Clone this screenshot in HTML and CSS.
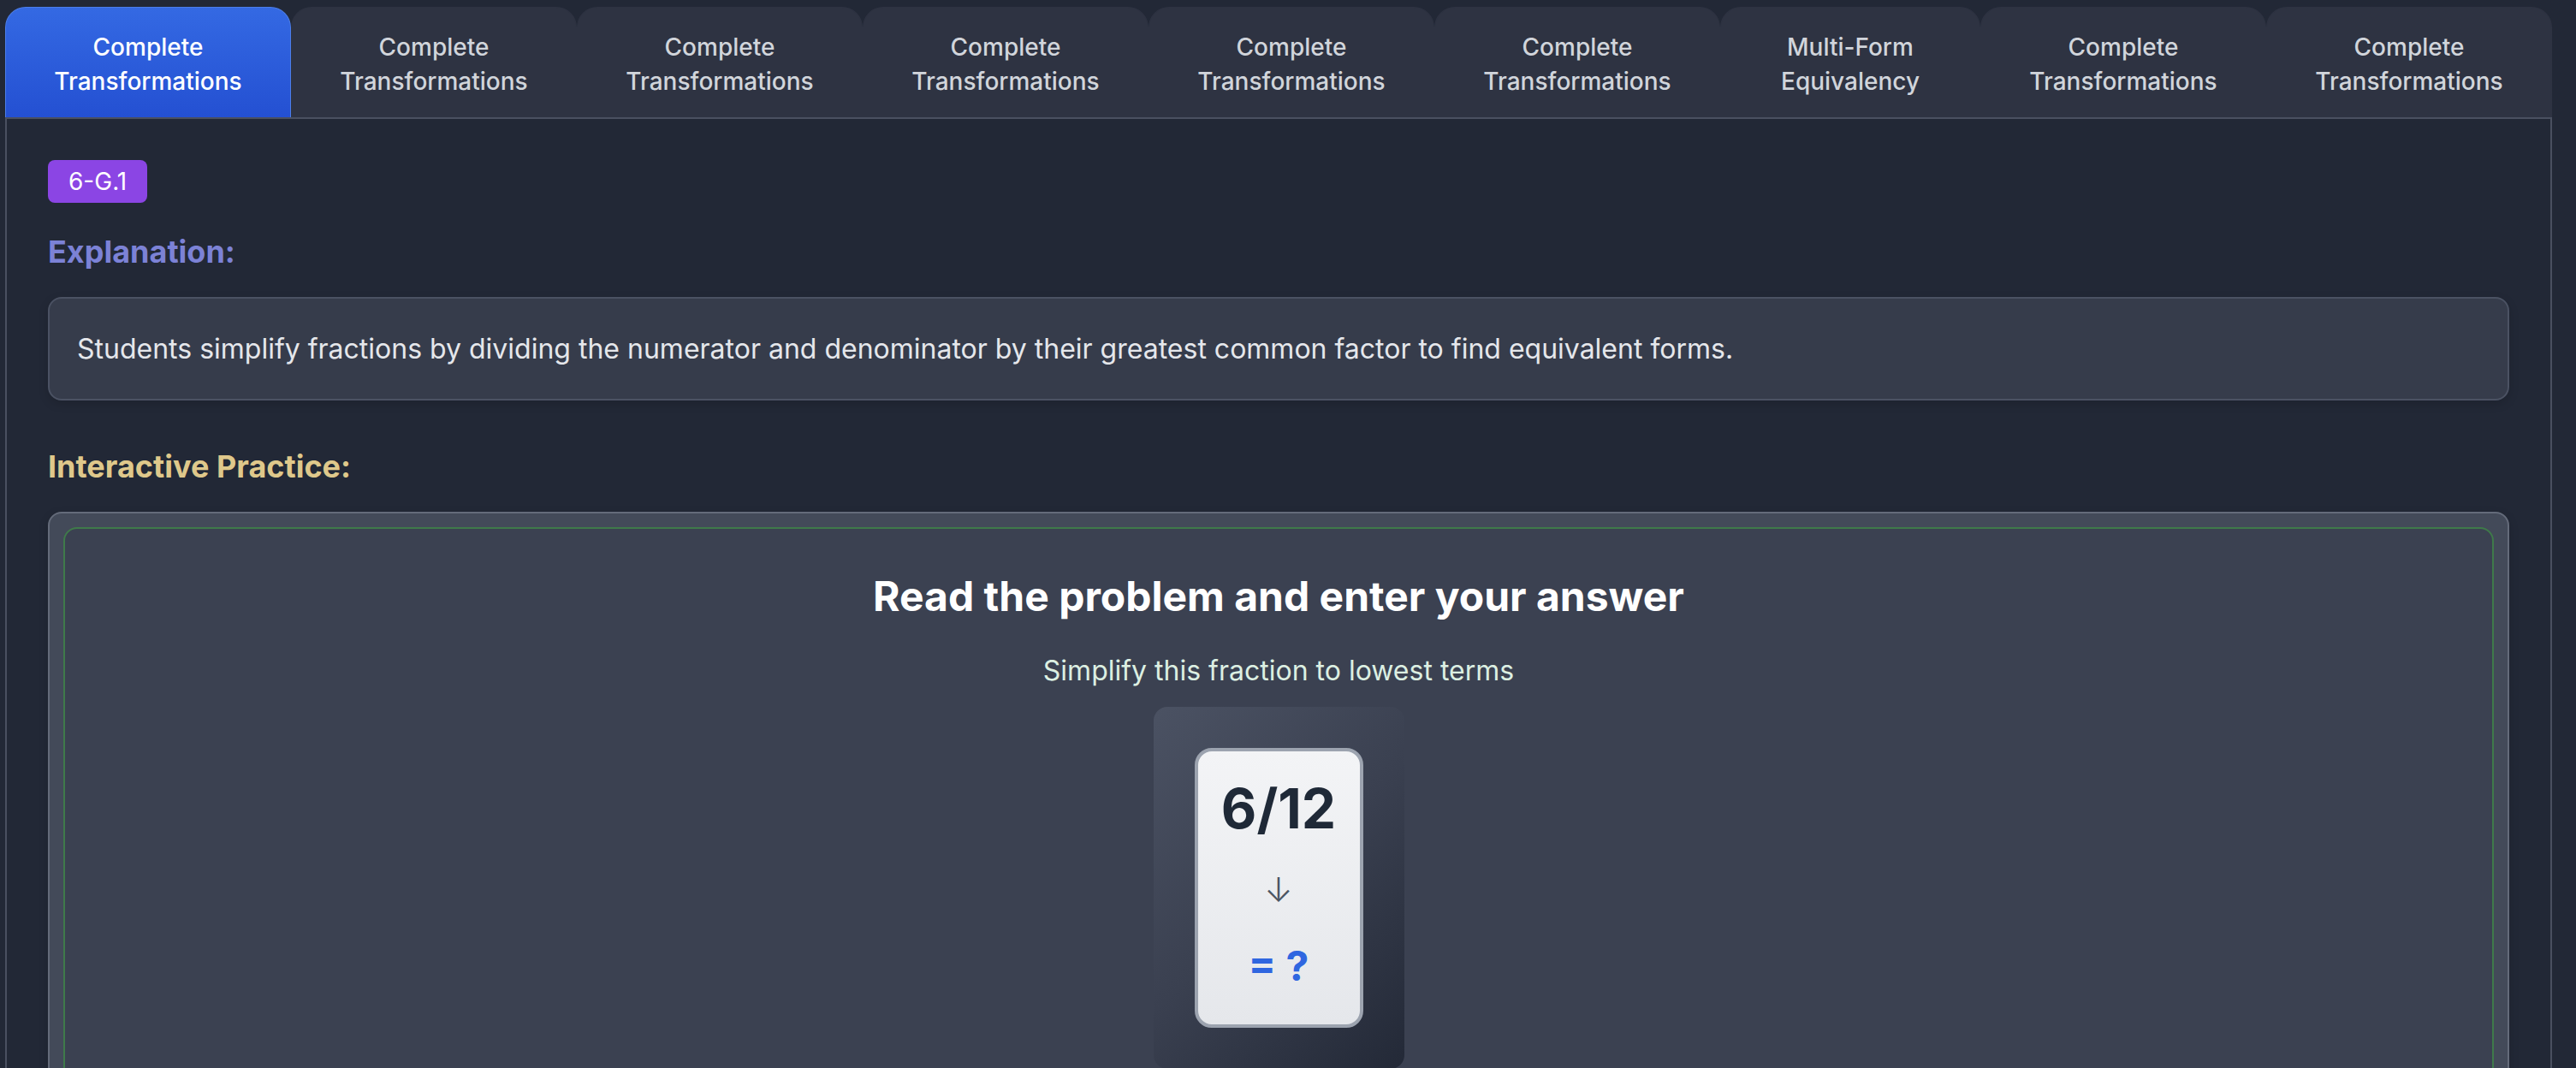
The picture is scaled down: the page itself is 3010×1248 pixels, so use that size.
FILE: index.html
```html
<!DOCTYPE html>
<html lang="en">
<head>
<meta charset="utf-8">
<title>Fractions Practice</title>
<link rel="stylesheet" href="styles.css">
</head>
<body>
<div class="app">
  <nav class="tabs">
    <button class="tab active">Complete<br>Transformations</button>
    <button class="tab">Complete<br>Transformations</button>
    <button class="tab">Complete<br>Transformations</button>
    <button class="tab">Complete<br>Transformations</button>
    <button class="tab">Complete<br>Transformations</button>
    <button class="tab">Complete<br>Transformations</button>
    <button class="tab tab-short">Multi-Form<br>Equivalency</button>
    <button class="tab">Complete<br>Transformations</button>
    <button class="tab">Complete<br>Transformations</button>
  </nav>
  <main class="panel">
    <span class="badge">6-G.1</span>
    <h2 class="heading heading-explain">Explanation:</h2>
    <div class="explain-box">Students simplify fractions by dividing the numerator and denominator by their greatest common factor to find equivalent forms.</div>
    <h2 class="heading heading-practice">Interactive Practice:</h2>
    <section class="practice">
      <div class="practice-inner">
        <h3 class="prob-title">Read the problem and enter your answer</h3>
        <p class="prob-sub">Simplify this fraction to lowest terms</p>
        <div class="card-wrap">
          <div class="card">
            <div class="frac">6/12</div>
            <div class="arrow">↓</div>
            <div class="result">= ?</div>
          </div>
        </div>
        <div class="answer-row">
          <input class="answer" type="text" placeholder="Your answer">
        </div>
      </div>
    </section>
  </main>
</div>
</body>
</html>
```
FILE: styles.css
```css
html, body {
  margin: 0;
  padding: 0;
  background: #222836;
  overflow: hidden;
}
body {
  font-family: Inter, "Noto Sans", "Liberation Sans", sans-serif;
  color: #e5e7eb;
}
.app {
  margin: 8px 0 0 6px;
  width: 2976px;
}
.tabs {
  display: flex;
}
.tab {
  flex: 0 0 auto;
  width: 334px;
  box-sizing: border-box;
  padding: 26px 8px 22px;
  border: 1px solid #2e3342;
  border-bottom: none;
  border-radius: 24px 24px 0 0;
  background: #2e3342;
  color: #d1d5db;
  font-family: inherit;
  font-size: 28px;
  font-weight: 500;
  line-height: 40px;
  text-align: center;
}
.tab-short {
  width: 304px;
}
.tab.active {
  background: linear-gradient(to bottom, #3469e3, #2450d2);
  border-color: #4c7ee9;
  color: #ffffff;
}
.panel {
  box-sizing: border-box;
  border: 2px solid #4a5060;
  background: #222836;
  padding: 48px 48px 60px;
  min-height: 1400px;
}
.badge {
  display: inline-block;
  background: #8b45e4;
  color: #ffffff;
  font-size: 28px;
  font-weight: 400;
  line-height: 32px;
  padding: 9px 24px;
  border-radius: 8px;
}
.heading {
  margin: 0;
  font-size: 36px;
  font-weight: 700;
  line-height: 44px;
}
.heading-explain {
  color: #7c82d6;
  margin-top: 35px;
  margin-bottom: 31px;
}
.heading-practice {
  color: #dfc88b;
  margin-top: 55px;
  margin-bottom: 31px;
}
.explain-box {
  background: #363c4b;
  border: 2px solid #4b5263;
  border-radius: 16px;
  padding: 33px 32px;
  font-size: 32px;
  line-height: 51px;
  color: #e5e7eb;
  box-shadow: 0 4px 12px rgba(0, 0, 0, 0.15);
}
.practice {
  background: #434a59;
  border: 2px solid #646b7a;
  border-radius: 16px;
  padding: 16px;
  box-shadow: 0 4px 12px rgba(0, 0, 0, 0.15);
}
.practice-inner {
  background: #3b4151;
  border: 2px solid #3f7a4a;
  border-radius: 16px;
  padding: 50px 48px 60px;
  display: flex;
  flex-direction: column;
  align-items: center;
}
.prob-title {
  margin: 0;
  font-size: 48px;
  font-weight: 700;
  line-height: 58px;
  color: #ffffff;
}
.prob-sub {
  margin: 38px 0 23px;
  font-size: 32px;
  line-height: 39px;
  color: #dcefe2;
}
.card-wrap {
  padding: 48px;
  border-radius: 16px;
  background: linear-gradient(135deg, #4b5263 0%, #3a4050 50%, #232937 100%);
}
.card {
  box-sizing: border-box;
  width: 197px;
  height: 327px;
  border: 4px solid #9ca3af;
  border-radius: 20px;
  background: linear-gradient(to bottom, #f3f4f6, #e5e7eb);
  display: flex;
  flex-direction: column;
  align-items: center;
  padding-top: 28px;
}
.frac {
  font-size: 64px;
  font-weight: 700;
  line-height: 78px;
  color: #1f2937;
}
.arrow {
  margin-top: 32px;
  font-size: 40px;
  font-weight: 300;
  line-height: 48px;
  color: #4b5563;
}
.result {
  margin-top: 36px;
  font-size: 48px;
  font-weight: 700;
  line-height: 58px;
  color: #2f66e0;
}
.answer-row {
  margin-top: 40px;
}
.answer {
  font-family: inherit;
  font-size: 32px;
  padding: 16px 24px;
  border-radius: 12px;
  border: 2px solid #6b7280;
  background: #1f2937;
  color: #e5e7eb;
}
```
